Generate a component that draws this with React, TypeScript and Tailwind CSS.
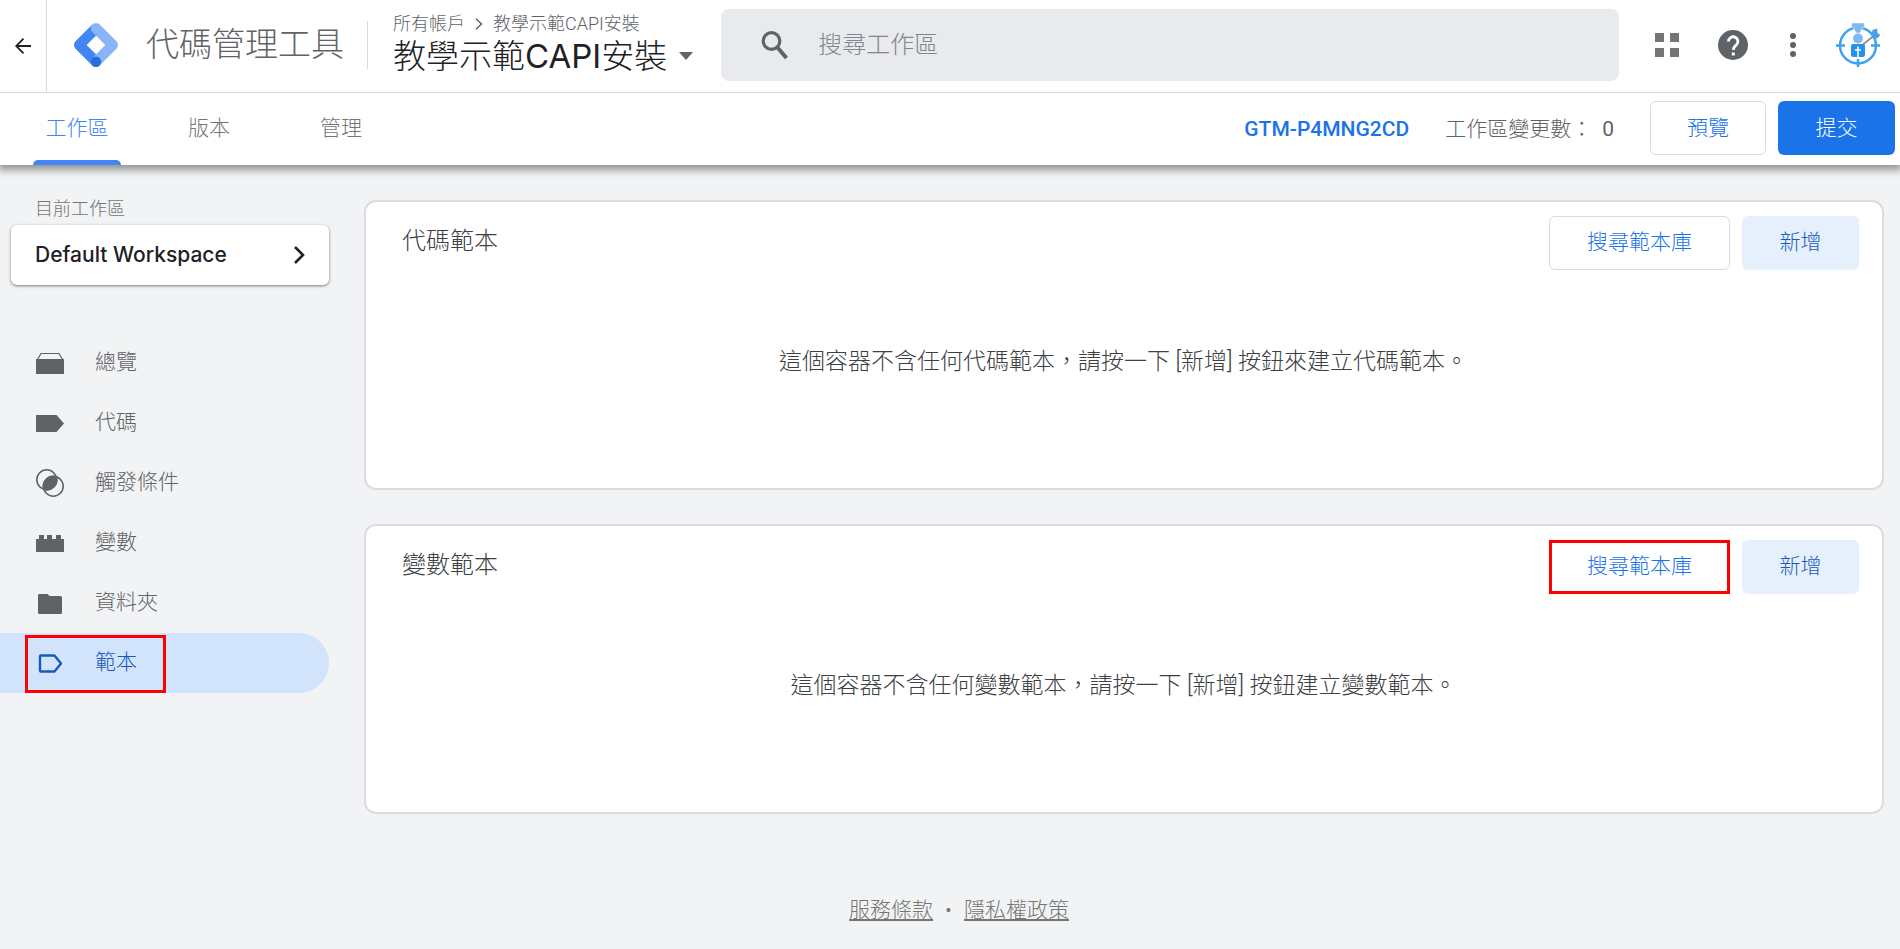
import React from 'react';

type IconProps = { className?: string };

const OverviewIcon: React.FC<IconProps> = ({ className }) => (
  <svg viewBox="0 0 28 28" className={className} fill="currentColor" aria-hidden="true">
    <path d="M0 10h28v15H0z" />
    <path d="M1.500 10.500L5 4.500h18l3.500 6" fill="none" stroke="currentColor" strokeWidth="1.200" />
  </svg>
);

const TagIcon: React.FC<IconProps> = ({ className }) => (
  <svg viewBox="0 0 28 28" className={className} fill="currentColor" aria-hidden="true">
    <path d="M0 6h20.500L28 14.500 20.500 23H0z" />
  </svg>
);

const TriggerIcon: React.FC<IconProps> = ({ className }) => (
  <svg viewBox="0 0 28 28" className={className} fill="none" stroke="currentColor" strokeWidth="1.600" aria-hidden="true">
    <circle cx="10.700" cy="10.700" r="9.900" />
    <circle cx="17.300" cy="17.300" r="9.900" />
    <path d="M20.300 7.900A9.900 9.900 0 0 0 7.900 20.300 9.900 9.900 0 0 0 20.300 7.900z" fill="currentColor" />
  </svg>
);

const VariableIcon: React.FC<IconProps> = ({ className }) => (
  <svg viewBox="0 0 28 28" className={className} fill="currentColor" aria-hidden="true">
    <path d="M0 10h3V6h5v4h3V6h5v4h4V6h5v4h3v13H0z" />
  </svg>
);

const FolderIcon: React.FC<IconProps> = ({ className }) => (
  <svg viewBox="0 0 28 28" className={className} fill="currentColor" aria-hidden="true">
    <path d="M4 5h7.500l2 2H24.500a1.500 1.500 0 0 1 1.500 1.500v15a1.500 1.500 0 0 1-1.500 1.500h-21A1.500 1.500 0 0 1 2 23.500v-17A1.500 1.500 0 0 1 4 5z" />
  </svg>
);

const TemplateIcon: React.FC<IconProps> = ({ className }) => (
  <svg viewBox="0 0 28 28" className={className} fill="none" stroke="currentColor" strokeWidth="2.400" strokeLinejoin="round" aria-hidden="true">
    <path d="M5 6.500h13.500L25 14.500l-6.500 8H5a1 1 0 0 1-1-1v-14a1 1 0 0 1 1-1z" />
  </svg>
);

const Logo: React.FC<IconProps> = ({ className }) => (
  <svg viewBox="0 0 44 44" className={className} aria-hidden="true">
    <path d="M22 38.800L5.200 22 22 5.200" fill="none" stroke="#4285f4" strokeWidth="10.400" strokeLinejoin="round" />
    <path d="M22 5.200L38.800 22 22 38.800" fill="none" stroke="#8ab4f8" strokeWidth="10.400" strokeLinejoin="round" strokeLinecap="round" />
    <circle cx="22" cy="38.800" r="5.200" fill="#246fdb" />
  </svg>
);

const Avatar: React.FC<IconProps> = ({ className }) => (
  <svg viewBox="0 0 44 44" className={className} aria-hidden="true">
    <circle cx="22" cy="22.500" r="18" fill="none" stroke="#3ea2f3" strokeWidth="2.500" />
    <path d="M0 22.500h9M35 22.500h9M22 36v8" stroke="#3ea2f3" strokeWidth="2.500" />
    <path d="M15.500 0h13v4h-1.500l-3 6h-4l-3-6h-1.500z" fill="#84b8f1" stroke="#fff" strokeWidth="0.500" />
    <path d="M27 21.500L40 11" stroke="#8a9299" strokeWidth="1.800" />
    <path d="M35.500 12l1-5L41 5.500l.5 4.500 3 2-3.500 3.500-4.500-.5z" fill="#4d9fe8" />
    <circle cx="22" cy="15.500" r="5" fill="#7fb8f2" />
    <path d="M17 21h10a2 2 0 0 1 2 2v9a2 2 0 0 1-2 2H17a2 2 0 0 1-2-2v-9a2 2 0 0 1 2-2z" fill="#2692ef" />
    <path d="M22 23.500V34M19 27h6" stroke="#fff" strokeWidth="1.600" />
  </svg>
);

const tabs = ['工作區', '版本', '管理'];

const navItems = [
  { label: '總覽', Icon: OverviewIcon },
  { label: '代碼', Icon: TagIcon },
  { label: '觸發條件', Icon: TriggerIcon },
  { label: '變數', Icon: VariableIcon },
  { label: '資料夾', Icon: FolderIcon },
  { label: '範本', Icon: TemplateIcon },
];

const panels = [
  { title: '代碼範本', message: '這個容器不含任何代碼範本，請按一下 [新增] 按鈕來建立代碼範本。', marked: false },
  { title: '變數範本', message: '這個容器不含任何變數範本，請按一下 [新增] 按鈕建立變數範本。', marked: true },
];

const Header: React.FC = () => (
  <header className="relative z-10 flex h-[93px] items-center border-b border-[#dadce0] bg-white">
    <button aria-label="返回" className="flex w-[47px] shrink-0 items-center justify-center self-stretch border-r border-[#dadce0] text-[#202124]">
      <svg viewBox="0 0 16 16" className="h-4 w-4" fill="none" stroke="currentColor" strokeWidth="1.800" aria-hidden="true">
        <path d="M16 8H1.500M8.500.7L1.200 8l7.300 7.300" />
      </svg>
    </button>
    <div className="flex min-w-0 flex-1 items-center pb-0.5">
      <Logo className="ml-[27px] h-11 w-11 shrink-0" />
      <span className="ml-7 shrink-0 text-[33px] leading-10 text-[#5f6368]">代碼管理工具</span>
      <div className="ml-[23px] h-12 w-px shrink-0 bg-[#dadce0]" />
      <div className="ml-[25px] shrink-0 pb-0.5">
        <div className="flex items-center gap-2.5 text-lg leading-6 text-[#5f6368]">
          <a href="#accounts">所有帳戶</a>
          <svg viewBox="0 0 8 12" className="h-3 w-2" fill="none" stroke="currentColor" strokeWidth="1.500" aria-hidden="true">
            <path d="M1 .8L6.500 6 1 11.200" />
          </svg>
          <a href="#account">教學示範CAPI安裝</a>
        </div>
        <button className="flex items-center gap-3 text-[33px] leading-10 text-[#202124]">
          <span>
            教學示範<span className="font-['Inter'] font-normal">CAPI</span>安裝
          </span>
          <svg viewBox="0 0 14 8" className="h-2 w-3.5" fill="#5f6368" aria-hidden="true">
            <path d="M0 0h14L7 8z" />
          </svg>
        </button>
      </div>
      <label className="ml-7 flex h-[72px] min-w-0 flex-1 items-center rounded-lg bg-[#e8eaed] pl-10">
        <svg viewBox="0 0 27 30" className="h-[30px] w-[27px] shrink-0" fill="none" stroke="#5f6368" strokeWidth="3.200" aria-hidden="true">
          <circle cx="10.500" cy="11" r="8.300" />
          <path d="M16 17l9.500 11" strokeWidth="4" />
        </svg>
        <input
          type="text"
          aria-label="搜尋工作區"
          placeholder="搜尋工作區"
          className="ml-[30px] min-w-0 flex-1 bg-transparent text-2xl font-light outline-none placeholder:text-[#80868b]"
        />
      </label>
      <div className="ml-9 mr-5 flex shrink-0 items-center text-[#5f6368]">
        <button aria-label="應用程式">
          <svg viewBox="0 0 24 24" className="h-6 w-6" fill="#757575" aria-hidden="true">
            <path d="M0 0h9v9H0zM15 0h9v9h-9zM0 15h9v9H0zM15 15h9v9h-9z" />
          </svg>
        </button>
        <button aria-label="說明" className="ml-[39px]">
          <svg viewBox="0 0 30 30" className="h-[30px] w-[30px]" aria-hidden="true">
            <circle cx="15" cy="15" r="15" fill="currentColor" />
            <path d="M10.500 11.500a4.700 4.700 0 1 1 8 3.300c-1.700 1.500-3.200 2.300-3.200 5.200" fill="none" stroke="#fff" strokeWidth="2.800" />
            <path d="M13.800 22.500h3v3h-3z" fill="#fff" />
          </svg>
        </button>
        <button aria-label="更多" className="ml-[42px]">
          <svg viewBox="0 0 6 24" className="h-6 w-1.5" fill="currentColor" aria-hidden="true">
            <circle cx="3" cy="3" r="3" />
            <circle cx="3" cy="12" r="3" />
            <circle cx="3" cy="21" r="3" />
          </svg>
        </button>
        <button aria-label="帳戶" className="ml-10">
          <Avatar className="h-11 w-11" />
        </button>
      </div>
    </div>
  </header>
);

const Toolbar: React.FC = () => (
  <div className="relative flex h-[72px] items-center bg-white text-[21px] leading-7 text-[#5f6368] shadow-[0_3px_8px_2px_rgba(0,0,0,0.4)]">
    <nav className="ml-[11px] flex self-stretch">
      {tabs.map((tab, i) => (
        <a
          key={tab}
          href={`#tab-${i}`}
          className={`flex w-[132px] flex-col items-center justify-end ${i === 0 ? 'text-[#4285f4]' : 'text-[#757575]'}`}
        >
          <span className="mb-[18px]">{tab}</span>
          <span className={`h-[5px] w-[88px] rounded-t-md ${i === 0 ? 'bg-[#4285f4]' : ''}`} />
        </a>
      ))}
    </nav>
    <div className="ml-auto mr-[5px] flex items-center pb-0.5">
      <a href="#container" className="pt-0.5 font-medium text-[#1a73e8]">GTM-P4MNG2CD</a>
      <span className="mx-9 flex gap-2.5 pt-0.5">
        工作區變更數：<span className="font-normal">0</span>
      </span>
      <button className="h-[54px] w-[116px] rounded-md border border-[#dadce0] text-[#1a73e8]">預覽</button>
      <button className="ml-3 h-[54px] w-[117px] rounded-md bg-[#1a73e8] text-white">提交</button>
    </div>
  </div>
);

const Sidebar: React.FC = () => (
  <aside className="w-[329px] shrink-0 pt-8">
    <p className="pl-[35px] text-lg leading-6 text-[#757575]">目前工作區</p>
    <button className="ml-[11px] mt-1 flex h-[60px] w-[318px] items-center justify-between rounded-md bg-white pl-6 pr-6 font-['Inter','Noto_Sans_CJK_TC',sans-serif] text-[21px] font-medium text-[#202124] shadow-[0_1px_3px_rgba(0,0,0,0.5)]">
      Default Workspace
      <svg viewBox="0 0 11 18" className="h-[18px] w-[11px]" fill="none" stroke="currentColor" strokeWidth="2.600" aria-hidden="true">
        <path d="M1 1l8 8-8 8" />
      </svg>
    </button>
    <nav className="mt-12 text-[21px] leading-7">
      {navItems.map(({ label, Icon }, i) => {
        const active = i === navItems.length - 1;
        return (
          <a
            key={label}
            href={`#nav-${i}`}
            className={`relative flex h-[60px] items-center gap-[31px] rounded-r-full pl-9 ${active ? 'bg-[#d2e3fc] text-[#185abc]' : 'text-[#5f6368]'}`}
          >
            <Icon className="h-7 w-7" />
            <span className="pb-0.5">{label}</span>
            {active && <span className="absolute bottom-0 left-[25px] top-0.5 w-[141px] border-[3px] border-[#ff0000]" />}
          </a>
        );
      })}
    </nav>
  </aside>
);

const App: React.FC = () => {
  return (
    <div className="min-h-screen bg-[#f1f3f4] font-['Roboto','Noto_Sans_CJK_TC',sans-serif] font-light">
      <Header />
      <Toolbar />
      <div className="flex">
        <Sidebar />
        <main className="ml-[35px] mr-4 flex flex-1 flex-col gap-[34px] pt-[35px]">
          {panels.map((panel) => (
            <section key={panel.title} className="min-h-[290px] rounded-xl border-2 border-[#dadce0] bg-white pl-9 pr-[23px] pt-3.5">
              <div className="flex items-center">
                <h2 className="mb-1 mr-auto text-2xl leading-8 text-[#3c4043]">{panel.title}</h2>
                <button
                  className={`h-[54px] w-[181px] text-[21px] text-[#1a73e8] ${
                    panel.marked ? 'border-[3px] border-[#ff0000]' : 'rounded-md border border-[#dadce0]'
                  }`}
                >
                  搜尋範本庫
                </button>
                <button className="ml-3 h-[54px] w-[117px] rounded-md bg-[#e6f0fd] text-[21px] text-[#185abc]">新增</button>
              </div>
              <p className="mt-[76px] pr-3.5 text-center text-[23px] leading-8 text-[#3c4043]">{panel.message}</p>
            </section>
          ))}
        </main>
      </div>
      <footer className="flex justify-center gap-3 pb-6 pl-[18px] pt-20 text-[21px] leading-8 text-[#757575]">
        <a href="#terms" className="underline">服務條款</a>
        <span>•</span>
        <a href="#privacy" className="underline">隱私權政策</a>
      </footer>
    </div>
  );
};

export default App;
